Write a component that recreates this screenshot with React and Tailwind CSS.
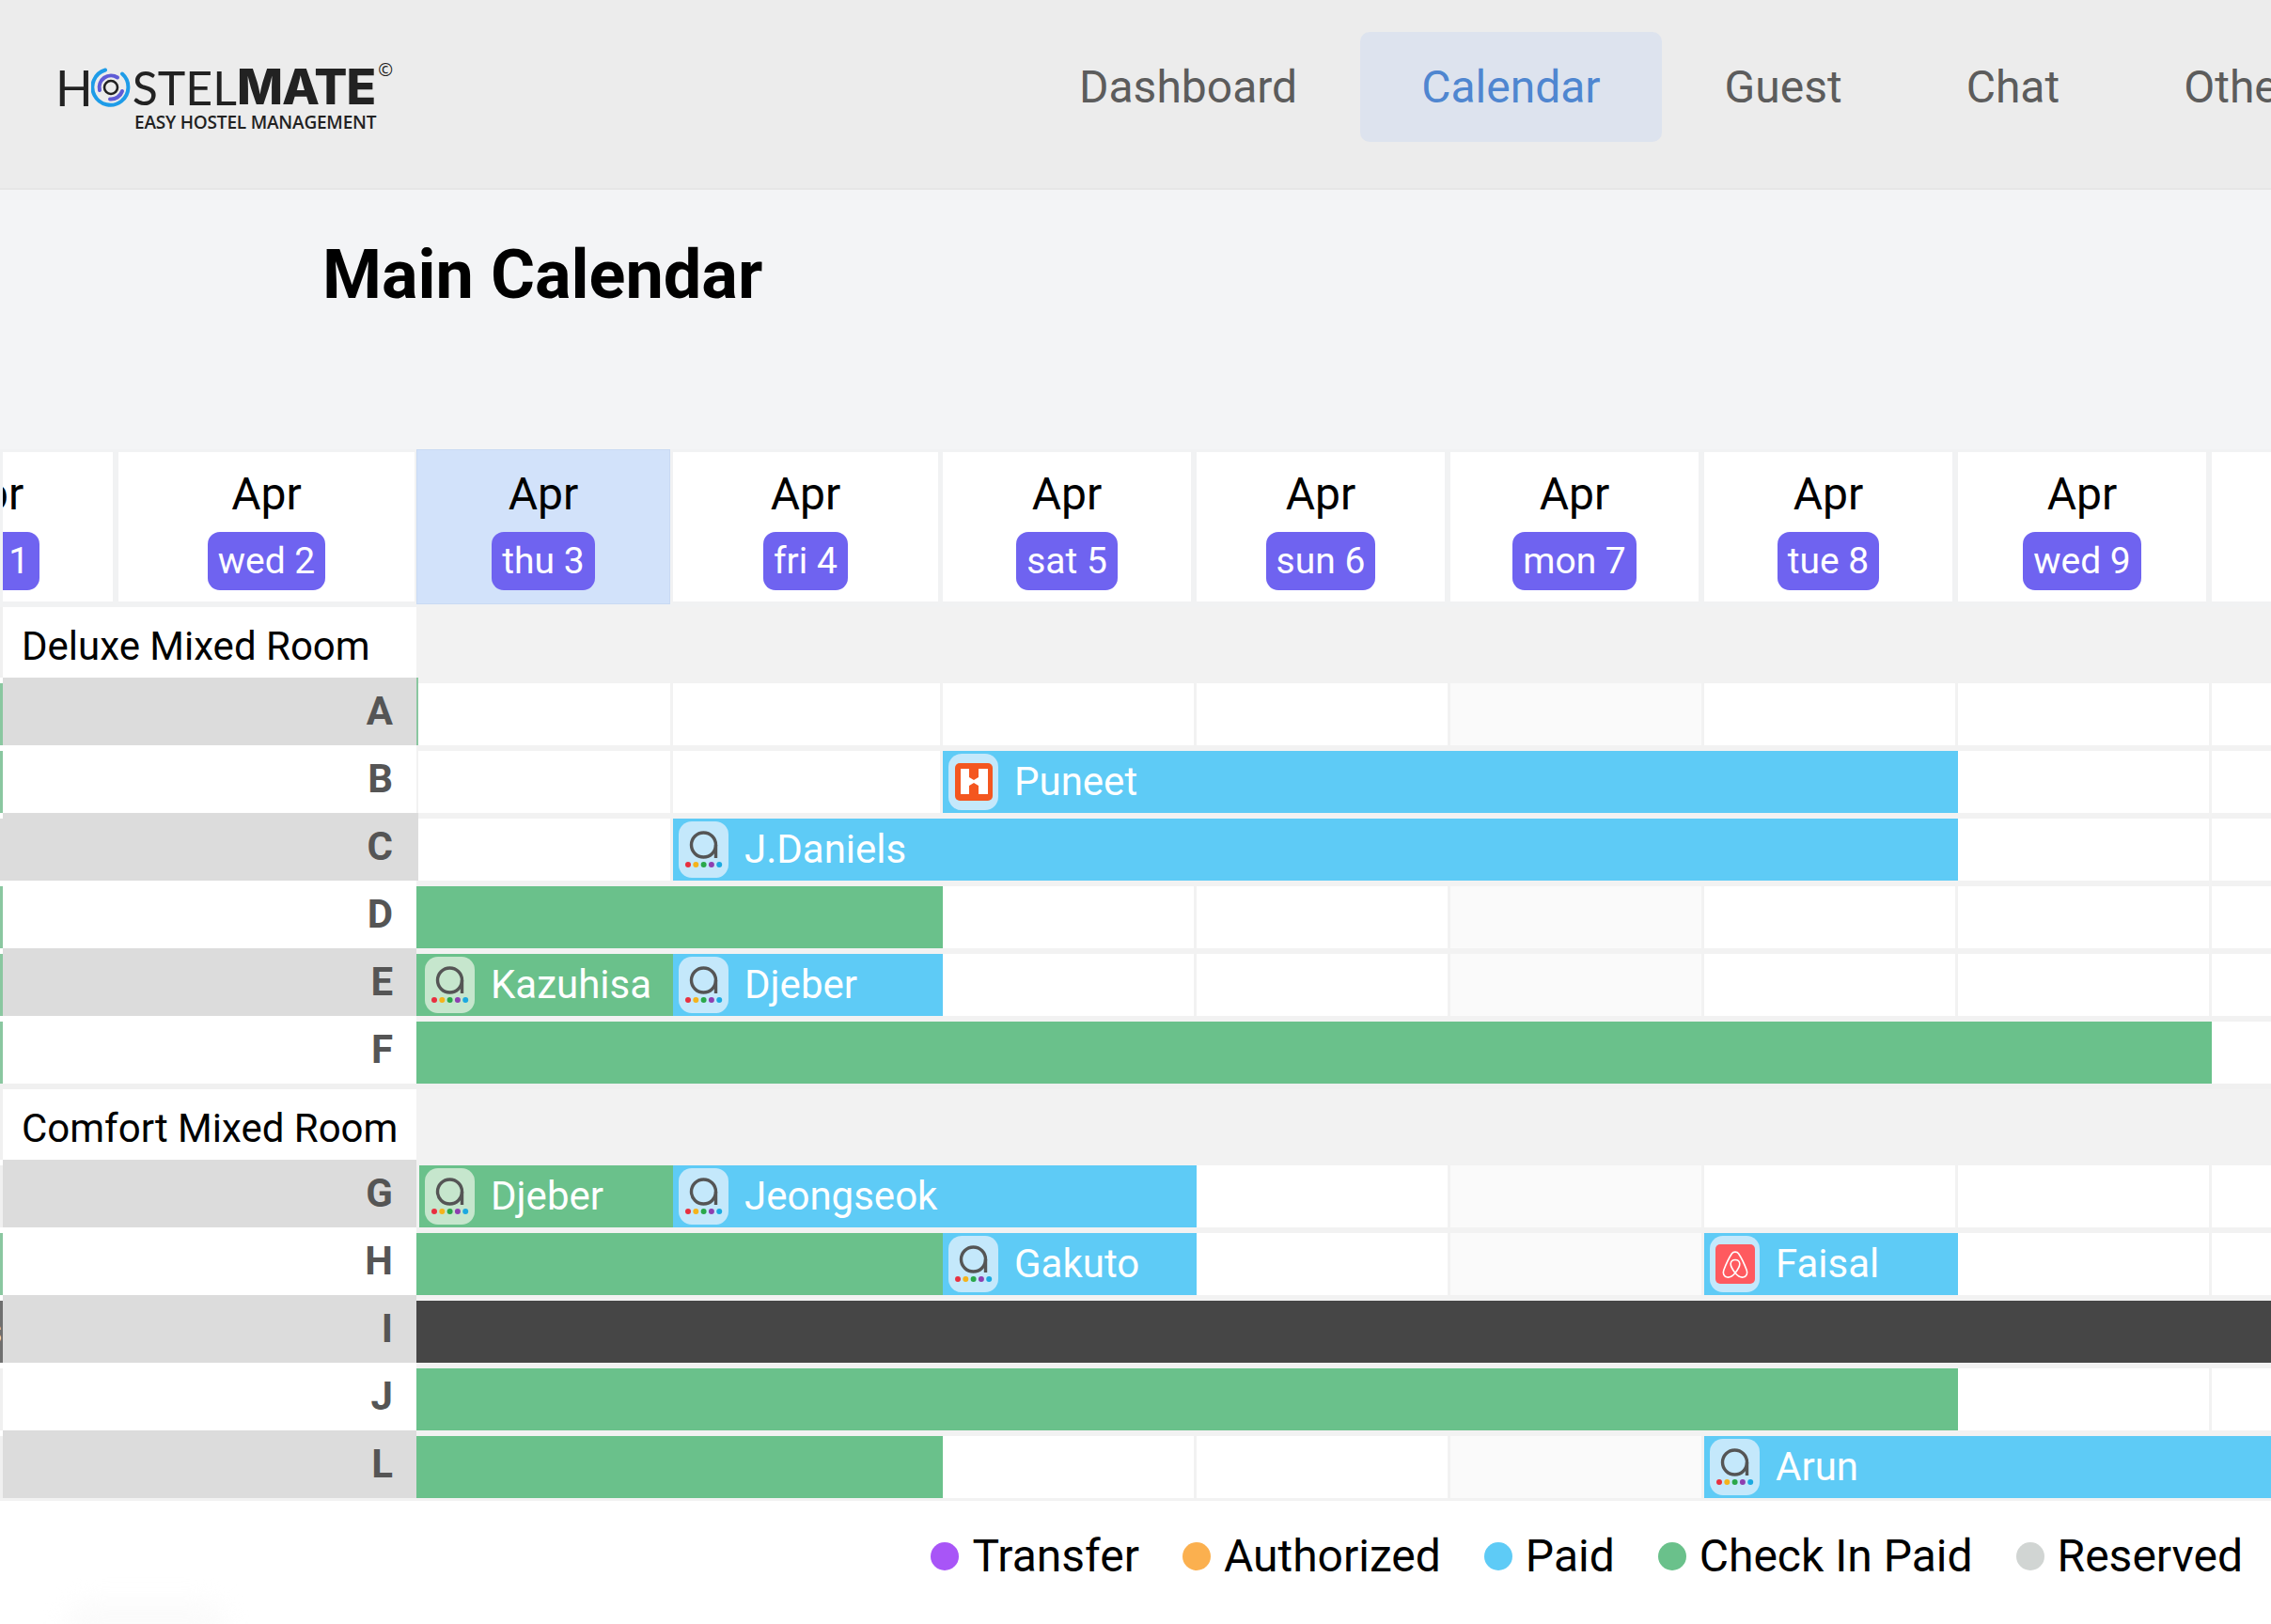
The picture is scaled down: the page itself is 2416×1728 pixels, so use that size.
import React from 'react';

const navItems = ['Dashboard', 'Calendar', 'Guest', 'Chat', 'Others'];

const days = [
  { label: 'thu 3', col: 'w-[270px] mr-[3px]', today: true },
  { label: 'fri 4', col: 'w-[282px] mr-[5px]' },
  { label: 'sat 5', col: 'w-[264px] mr-[6px]' },
  { label: 'sun 6', col: 'w-[264px] mr-[6px]' },
  { label: 'mon 7', col: 'w-[264px] mr-[6px]' },
  { label: 'tue 8', col: 'w-[264px] mr-[6px]' },
  { label: 'wed 9', col: 'w-[264px] mr-[6px]' },
];

const spans = { 1: 'col-span-1', 2: 'col-span-2', 3: 'col-span-3', 4: 'col-span-4', 5: 'col-span-5', 6: 'col-span-6', 7: 'col-span-7', 8: 'col-span-8' };

const e = (col, edge = 'bg-[#f2f2f2]') => ({ type: 'empty', col, edge });
const green = (span, extra = {}) => ({ type: 'green', span, ...extra });
const blue = (span, name, icon = 'agoda') => ({ type: 'blue', span, name, icon });

const deluxeRooms = [
  { id: 'A', side: 'bg-[#8ac7a0]', cells: [e(0, 'bg-[#8ac7a0]'), e(1), e(2), e(3), e(4), e(5), e(6), e(7)] },
  { id: 'B', side: 'bg-[#8ac7a0]', cells: [e(0), e(1), blue(4, 'Puneet', 'hostelworld'), e(6), e(7)] },
  { id: 'C', side: 'bg-[#dcdcdc]', cells: [e(0, 'bg-[#dcdcdc]'), blue(5, 'J.Daniels'), e(6), e(7)] },
  { id: 'D', side: 'bg-[#8ac7a0]', cells: [green(2), e(2), e(3), e(4), e(5), e(6), e(7)] },
  { id: 'E', side: 'bg-[#8ac7a0]', cells: [green(1, { name: 'Kazuhisa', icon: 'agoda', pad: 'pl-[9px]' }), blue(1, 'Djeber'), e(2), e(3), e(4), e(5), e(6), e(7)] },
  { id: 'F', side: 'bg-[#8ac7a0]', cells: [green(7), e(7)] },
];

const comfortRooms = [
  { id: 'G', side: 'bg-[#f0f0f0]', cells: [green(1, { name: 'Djeber', icon: 'agoda', inset: true }), blue(2, 'Jeongseok'), e(3), e(4), e(5), e(6), e(7)] },
  { id: 'H', side: 'bg-[#8ac7a0]', cells: [green(2), blue(1, 'Gakuto'), e(3), e(4), blue(1, 'Faisal', 'airbnb'), e(6), e(7)] },
  { id: 'I', side: 'bg-[#707070]', cells: [{ type: 'dark', span: 8 }] },
  { id: 'J', side: 'bg-[#f0f0f0]', cells: [green(6), e(6), e(7)] },
  { id: 'L', side: 'bg-[#f0f0f0]', cells: [green(2), e(2), e(3), e(4), blue(3, 'Arun')] },
];

const legend = [
  { label: 'Transfer', dot: 'bg-[#a855f7]' },
  { label: 'Authorized', dot: 'bg-[#fbb04f]' },
  { label: 'Paid', dot: 'bg-[#5ecbf6]' },
  { label: 'Check In Paid', dot: 'bg-[#6ac18b]' },
  { label: 'Reserved', dot: 'bg-[#d1d5d3]' },
];

const LogoRing = () => (
  <svg width="42" height="42" viewBox="0 0 42 42" fill="none" className="-ml-[2px] mr-[3px]">
    <path d="M15 2.5 A19 19 0 1 0 33 6.5" stroke="#1e9ce8" strokeWidth="4" strokeLinecap="round" />
    <path d="M9 24 A12.5 12.5 0 0 1 28 10.5" stroke="#5f5bd6" strokeWidth="4" strokeLinecap="round" />
    <path d="M33 25 A12.5 12.5 0 0 1 20 33.5" stroke="#5f5bd6" strokeWidth="4" strokeLinecap="round" />
    <circle cx="21" cy="21" r="7" stroke="#222" strokeWidth="2.6" />
  </svg>
);

const Logo = () => (
  <div className="ml-[59px] w-[1024px] shrink-0 flex flex-col pt-[67px] font-['Open_Sans',sans-serif] text-[#222]">
    <div className="flex items-center h-[52px]">
      <span className="text-[52px] leading-none font-normal font-['Lato',sans-serif]">H</span>
      <LogoRing />
      <span className="text-[50px] leading-none font-normal font-['Lato',sans-serif] -ml-[1px]">STEL</span>
      <span className="text-[52px] leading-none font-extrabold font-['Inter',sans-serif] tracking-[-1px]">MATE</span>
      <span className="text-[19px] leading-none self-start ml-[3px] -mt-[2px]">©</span>
    </div>
    <div className="ml-[84px] mt-[2px] text-[19px] leading-none font-semibold whitespace-nowrap tracking-[-0.2px]">EASY HOSTEL MANAGEMENT</div>
  </div>
);

const AgodaIcon = () => (
  <svg width="53" height="60" viewBox="0 0 53 60" fill="none">
    <circle cx="26.5" cy="25" r="13" stroke="#555" strokeWidth="3.4" />
    <path d="M39.5 25 V39" stroke="#555" strokeWidth="3.4" />
    <circle cx="10" cy="46" r="3" fill="#e8303f" />
    <circle cx="18.3" cy="46" r="3" fill="#f5b31b" />
    <circle cx="26.6" cy="46" r="3" fill="#2aa84a" />
    <circle cx="34.9" cy="46" r="3" fill="#8e3fb0" />
    <circle cx="43.2" cy="46" r="3" fill="#1ba9e0" />
  </svg>
);

const HostelworldIcon = () => (
  <svg width="40" height="40" viewBox="0 0 40 40">
    <rect width="40" height="40" rx="5" fill="#f4561f" />
    <path d="M6 6 H15 V15 L20 18 L25 15 V6 H35 V33 H25 V24 L20 21 L15 24 V33 H6 Z" fill="#fff" />
  </svg>
);

const AirbnbIcon = () => (
  <svg width="42" height="42" viewBox="0 0 42 42" fill="none">
    <rect width="42" height="42" rx="5" fill="#ff5a5f" />
    <path
      d="M21 30.5 C18 34 15 35.5 12.5 35 C9 34.5 7.5 31 8.8 27.5 C10.5 23 15 13.5 17.5 9.8 C19 7.5 23 7.5 24.5 9.8 C27 13.5 31.5 23 33.2 27.5 C34.5 31 33 34.5 29.5 35 C27 35.5 24 34 21 30.5 C17.5 26 16 23 16.2 20.5 C16.5 18 18.5 16.5 21 16.5 C23.5 16.5 25.5 18 25.8 20.5 C26 23 24.5 26 21 30.5 Z"
      stroke="#fff"
      strokeWidth="1.6"
    />
  </svg>
);

const SourceTile = ({ icon, tone }) => (
  <div className={`w-[53px] h-[60px] rounded-[14px] flex items-center justify-center shrink-0 ${tone}`}>
    {icon === 'agoda' && <AgodaIcon />}
    {icon === 'hostelworld' && <HostelworldIcon />}
    {icon === 'airbnb' && <AirbnbIcon />}
  </div>
);

const Booking = ({ cell }) => {
  const isBlue = cell.type === 'blue';
  const bg = isBlue ? 'bg-[#5ecbf6]' : cell.type === 'green' ? 'bg-[#6ac18b]' : 'bg-[#464646]';
  return (
    <div className={`${spans[cell.span]} ${cell.inset ? 'pl-[3px]' : ''} bg-[#f2f2f2] pt-[6px] min-w-0`}>
      <div className={`h-[66px] flex items-center gap-[17px] ${cell.pad || 'pl-[6px]'} ${bg}`}>
        {cell.name && <SourceTile icon={cell.icon} tone={isBlue ? 'bg-[#c4e8fb]' : 'bg-[#c6e6cd]'} />}
        {cell.name && <span className="text-[42px] leading-none text-white whitespace-nowrap">{cell.name}</span>}
      </div>
    </div>
  );
};

const EmptyCell = ({ col, edge }) => (
  <div className="bg-[#f2f2f2] flex">
    {col === 0 && <div className={`w-[2px] shrink-0 ${edge}`} />}
    <div className={`flex-1 h-[66px] mt-[6px] ${col === 7 ? '' : 'mr-[3px]'} ${col === 4 ? 'bg-[#fafafa]' : 'bg-white'}`} />
  </div>
);

const RoomRow = ({ room, shaded }) => (
  <div className="grid grid-cols-[443px_273px_287px_270px_270px_270px_270px_270px_63px] h-[72px]">
    <div className="flex h-full">
      <div className={`w-[3px] mt-[6px] shrink-0 flex items-center overflow-hidden ${room.side}`}>
        {room.id === 'I' && <span className="text-[40px] leading-none text-white -ml-[18px]">s</span>}
      </div>
      <div className={`flex-1 flex items-center justify-end pr-[25px] ${shaded ? 'bg-[#dcdcdc]' : 'bg-white'}`}>
        <span className="text-[42px] leading-none font-bold text-[#555]">{room.id}</span>
      </div>
    </div>
    {room.cells.map((cell, i) =>
      cell.type === 'empty' ? <EmptyCell key={i} col={cell.col} edge={cell.edge} /> : <Booking key={i} cell={cell} />
    )}
  </div>
);

const RoomGroup = ({ name, rooms }) => (
  <div className="flex flex-col">
    <div className="flex h-[75px]">
      <div className="w-[443px] pl-[3px] bg-[#f0f0f0] shrink-0">
        <div className="h-full bg-white flex items-center pl-[20px] pt-[9px] text-[42px] leading-none text-black">{name}</div>
      </div>
      <div className="flex-1 bg-[#f2f2f2]" />
    </div>
    {rooms.map((room, i) => (
      <RoomRow key={room.id} room={room} shaded={i % 2 === 0} />
    ))}
  </div>
);

const DayHead = ({ label }) => (
  <>
    <span className="text-[48px] leading-none text-black">Apr</span>
    <span className="mt-[16px] h-[62px] px-[11px] rounded-[13px] bg-[#6f63f0] text-white text-[39px] leading-none flex items-center whitespace-nowrap shrink-0">
      {label}
    </span>
  </>
);

export default function App() {
  return (
    <div className="w-[2416px] h-[1728px] overflow-hidden bg-white font-[Roboto,sans-serif] relative">
      <header className="h-[202px] bg-[#ececec] border-b-2 border-[#e6e6e6] flex">
        <Logo />
        <nav className="flex items-start gap-[2px] pt-[34px] whitespace-nowrap">
          {navItems.map((item) => (
            <div
              key={item}
              className={`h-[117px] px-[65px] pt-[1px] rounded-[10px] flex items-center text-[48px] leading-none ${
                item === 'Calendar' ? 'bg-[#dde3ee] text-[#4f86d0]' : 'text-[#5c5c5c]'
              }`}
            >
              {item}
            </div>
          ))}
        </nav>
      </header>

      <div className="h-[276px] bg-[#f3f4f6] pl-[343px] pt-[55px]">
        <h1 className="text-[72px] leading-none font-bold text-black">Main Calendar</h1>
      </div>

      <div className="h-[168px] bg-[#f1f2f3] flex items-start">
        <div className="w-[117px] h-[159px] mt-[3px] ml-[3px] mr-[6px] bg-white overflow-hidden shrink-0">
          <div className="w-[264px] -ml-[147px] pt-[21px] flex flex-col items-center">
            <DayHead label="tue 1" />
          </div>
        </div>
        <div className="w-[315px] h-[159px] mt-[3px] mr-[2px] bg-white pt-[21px] flex flex-col items-center shrink-0">
          <DayHead label="wed 2" />
        </div>
        {days.map((day) => (
          <div
            key={day.label}
            className={`flex flex-col items-center shrink-0 ${day.col} ${
              day.today ? 'h-[165px] pt-[23px] bg-[#d2e2fa] border border-[#c9daf3]' : 'h-[159px] mt-[3px] pt-[21px] bg-white'
            }`}
          >
            <DayHead label={day.label} />
          </div>
        ))}
        <div className="flex-1 h-[159px] mt-[3px] bg-white" />
      </div>

      <RoomGroup name="Deluxe Mixed Room" rooms={deluxeRooms} />
      <div className="h-[6px] bg-[#f0f0f0]" />
      <RoomGroup name="Comfort Mixed Room" rooms={comfortRooms} />
      <div className="h-[3px] bg-[#f2f2f2]" />

      <div className="flex items-center justify-end gap-[46px] pt-[35px] pr-[30px]">
        {legend.map((item) => (
          <div key={item.label} className="flex items-center gap-[14px]">
            <span className={`w-[30px] h-[30px] rounded-full ${item.dot}`} />
            <span className="text-[48px] leading-none text-black">{item.label}</span>
          </div>
        ))}
      </div>

      <div className="absolute left-[70px] bottom-[-24px] w-[170px] h-[48px] rounded-full bg-[#fbfbfb] blur-md" />
    </div>
  );
}
